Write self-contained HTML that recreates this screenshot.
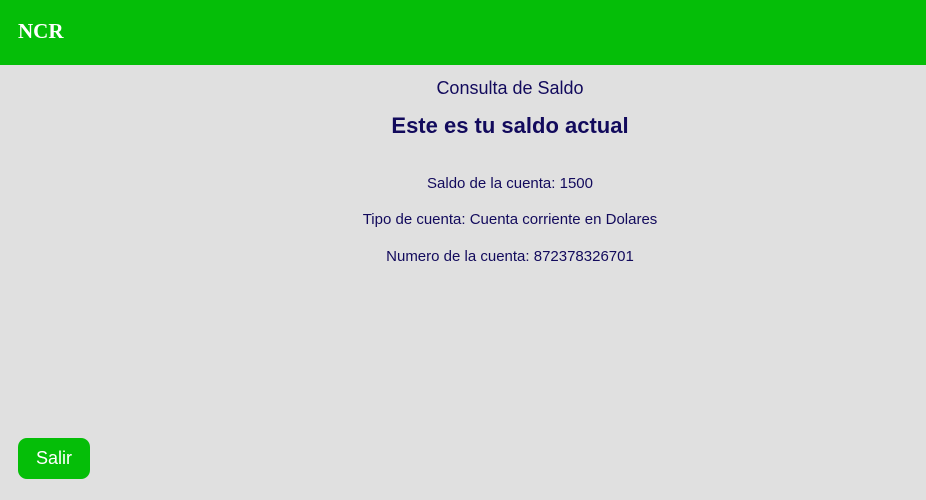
<!DOCTYPE html>
<html><head><style>
body{margin:0;width:926px;height:500px;background:#e0e0e0;font-family:"Liberation Sans",sans-serif;color:#120a5c;position:relative;overflow:hidden}
.h{height:65px;background:#05be08;}
.h span{position:absolute;left:18px;top:19px;font-family:"Liberation Serif",serif;font-weight:bold;font-size:21px;color:#fff}
.c{position:absolute;left:95px;width:830px;text-align:center;white-space:nowrap}
.b{position:absolute;left:18px;top:438px;width:72px;height:41px;background:#05be08;border-radius:9px;color:#fff;font-size:18px;text-align:center;line-height:41px}
</style></head><body>
<div class="h"><span>NCR</span></div>
<div class="c" style="top:78px;font-size:18px">Consulta de Saldo</div>
<div class="c" style="top:113px;font-size:22px;font-weight:bold">Este es tu saldo actual</div>
<div class="c" style="top:175px;font-size:15px">Saldo de la cuenta: 1500</div>
<div class="c" style="top:211px;font-size:15px">Tipo de cuenta: Cuenta corriente en Dolares</div>
<div class="c" style="top:248px;font-size:15px">Numero de la cuenta: 872378326701</div>
<div class="b">Salir</div>
</body></html>
